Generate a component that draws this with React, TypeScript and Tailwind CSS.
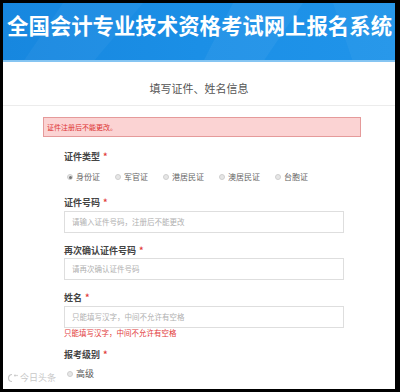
import React from "react";

const font = { fontFamily: '"Noto Sans CJK SC", "Noto Sans", sans-serif' };

function Radio({ label, checked, big }: { label: string; checked?: boolean; big?: boolean }) {
  return (
    <div className="flex items-center gap-[3px]">
      <span className="flex h-[6px] w-[6px] items-center justify-center rounded-full border border-[#cfcfcf] bg-[#e6e6e6]">
        {checked && <span className="h-[3px] w-[3px] rounded-full bg-[#777]" />}
      </span>
      <span className={big ? "text-[9px] leading-[12px] text-[#555]" : "text-[8px] leading-[12px] text-[#666]"}>{label}</span>
    </div>
  );
}

function Label({ text }: { text: string }) {
  return (
    <div className="flex h-[12px] items-center text-[9px] font-bold leading-[12px] text-[#444]">
      {text}
      <span className="ml-[3px] text-[#e23b3b]">*</span>
    </div>
  );
}

function Field({ placeholder }: { placeholder: string }) {
  return (
    <div className="flex h-[22px] w-[280px] items-center border border-[#dedede] bg-white pl-[7px] text-[7.5px] text-[#b0b0b0]">
      {placeholder}
    </div>
  );
}

export default function App() {
  return (
    <div className="h-[392px] w-[400px] bg-black pb-[3px] pl-[3px] pr-[5px] pt-[3px]" style={font}>
      <div className="relative flex h-[386px] w-[392px] flex-col overflow-hidden bg-white">
        <div className="relative h-[59px] w-full bg-gradient-to-r from-[#1787df] via-[#1b8fe6] to-[#2094ea]">
          <svg className="absolute inset-0" width="392" height="59" viewBox="0 0 392 59">
            <polygon points="60,0 140,0 90,59 20,59" fill="#ffffff" opacity="0.04" />
            <polygon points="230,0 300,0 260,59 200,59" fill="#ffffff" opacity="0.05" />
            <polygon points="330,0 392,0 392,59 350,59" fill="#ffffff" opacity="0.04" />
          </svg>
          <div className="absolute bottom-0 left-0 h-[2px] w-full bg-[#86c5f2]" />
          <div className="relative whitespace-nowrap pl-[4px] pt-[8px] text-[21.4px] font-bold leading-[28px] text-white">
            全国会计专业技术资格考试网上报名系统
          </div>
        </div>

        <div className="mt-[19px] text-center text-[11px] leading-[14px] text-[#555]">填写证件、姓名信息</div>
        <div className="mt-[10px] h-px w-full bg-[#ececec]" />

        <div className="ml-[40px] mt-[11px] flex h-[20px] w-[318px] items-center border border-[#e59a9a] bg-[#fbd3d3] pl-[3px] text-[7px] text-[#d33]">
          证件注册后不能更改。
        </div>

        <div className="ml-[61px] flex flex-col">
          <div className="mt-[14px]">
            <Label text="证件类型" />
          </div>
          <div className="mt-[8px] flex h-[12px] items-center gap-[15px] pl-[3px]">
            <Radio label="身份证" checked />
            <Radio label="军官证" />
            <Radio label="港居民证" />
            <Radio label="澳居民证" />
            <Radio label="台胞证" />
          </div>

          <div className="mt-[14px]">
            <Label text="证件号码" />
          </div>
          <div className="mt-[2px]">
            <Field placeholder="请输入证件号码，注册后不能更改" />
          </div>

          <div className="mt-[12px]">
            <Label text="再次确认证件号码" />
          </div>
          <div className="mt-[1px]">
            <Field placeholder="请再次确认证件号码" />
          </div>

          <div className="mt-[12px]">
            <Label text="姓名" />
          </div>
          <div className="mt-[2px]">
            <Field placeholder="只能填写汉字，中间不允许有空格" />
          </div>
          <div className="h-[10px] text-[7.5px] leading-[10px] text-[#e23b3b]">只能填写汉字，中间不允许有空格</div>

          <div className="mt-[11px]">
            <Label text="报考级别" />
          </div>
          <div className="mt-[7px] flex h-[12px] items-center pl-[3px]">
            <Radio label="高级" big />
          </div>
        </div>

        <div className="absolute bottom-[6px] left-[3px] flex items-center gap-[2px] text-[9px] leading-[10px] text-[#c8c8c8]">
          <svg width="12" height="10" viewBox="0 0 12 10">
            <path d="M6 1.5 A3.5 3.5 0 1 0 6 8.5" fill="none" stroke="#c8c8c8" strokeWidth="1.2" />
            <circle cx="9" cy="2.5" r="1" fill="#c8c8c8" />
            <circle cx="11" cy="2.5" r="0.8" fill="#c8c8c8" />
          </svg>
          <span>今日头条</span>
        </div>
      </div>
    </div>
  );
}
